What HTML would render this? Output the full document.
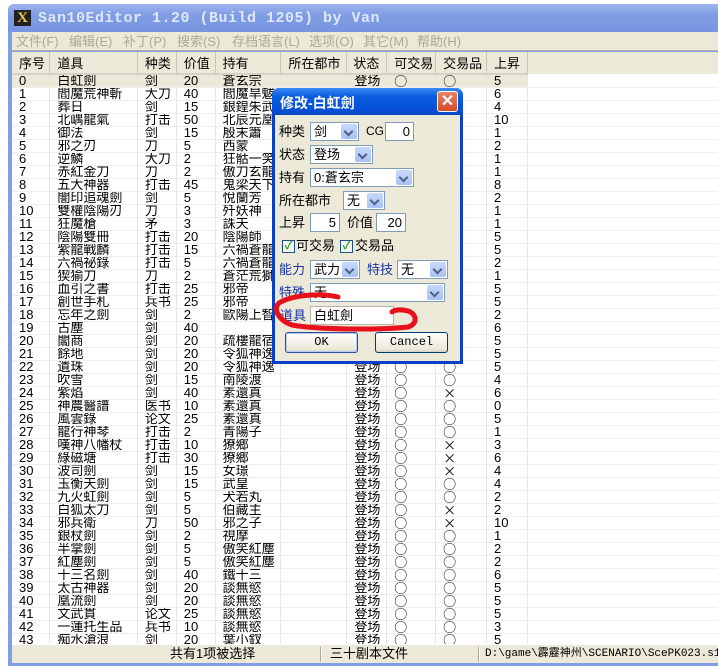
<!DOCTYPE html>
<html><head><meta charset="utf-8">
<style>
*{margin:0;padding:0;box-sizing:border-box}
body{width:718px;height:670px;overflow:hidden;background:#fff;font-family:"Liberation Sans","Noto Sans CJK SC",sans-serif;font-size:12px;position:relative}
.abs{position:absolute}
#win{left:8px;top:4px;width:720px;height:662px;background:#7e9ee6;border-radius:6px 6px 0 0}
#title{left:8px;top:4px;width:720px;height:28px;background:linear-gradient(#9db4ee,#7f9de4 40%,#7896e0);border-radius:6px 6px 0 0}
#title .t{left:30px;top:6px;color:#dfe7fb;font-family:"Liberation Mono",monospace;font-weight:bold;font-size:15px;letter-spacing:0.5px}
#title .ic{left:6px;top:6px;width:17px;height:16px;background:#222;color:#e8c24a;font-family:"Liberation Serif",serif;font-weight:bold;font-size:15px;line-height:16px;text-align:center}
#menu{left:12px;top:32px;width:710px;height:19px;background:#ece9d8;border-bottom:1px solid #b5b2a5;color:#aca899;font-size:13px;line-height:19px}
#menu span{position:absolute;top:0}
#list{left:12px;top:52px;width:710px;height:592px;background:#fff;overflow:hidden}
table{border-collapse:collapse;table-layout:fixed;position:absolute;left:0;top:0}
th{height:22px;background:#ece9d8;font-weight:normal;text-align:left;padding-left:7px;border-right:1px solid #c8c5b8;border-bottom:2px solid #d6d3c6;font-size:13px;white-space:nowrap}
td{height:13px;line-height:12px;padding-left:7px;border-right:1px solid #e6e6e6;border-bottom:1px solid #eeeeee;white-space:nowrap;overflow:hidden;font-size:13px}
td:nth-child(8),td:nth-child(9){font-family:"Noto Sans CJK SC",sans-serif;font-size:13px}
tr.sel td{background:#ece9d8}
#status{left:12px;top:644px;width:710px;height:19px;background:#ece9d8;border-top:1px solid #fff;font-size:13px;line-height:18px;white-space:nowrap}
#status span{position:absolute;top:0}
.sep{position:absolute;top:2px;width:2px;height:15px;border-left:1px solid #aca899;border-right:1px solid #fff}
#dlg{left:272px;top:88px;width:191px;height:276px;background:#0a3fc6;border-radius:7px 7px 0 0}
#dtitle{left:272px;top:88px;width:191px;height:27px;background:linear-gradient(#3d8af7,#0a5ddd 30%,#0550d8 80%,#0a46c0);border-radius:7px 7px 0 0}
#dtitle .t{left:8px;top:5px;color:#fff;font-weight:bold;font-size:14px}
#close{left:165px;top:3px;width:21px;height:21px;background:linear-gradient(#e8846a,#d54a28);border:1px solid #fff;border-radius:3px;color:#fff;text-align:center;font-size:16px;line-height:19px;font-weight:bold}
#dbody{left:275px;top:115px;width:185px;height:246px;background:#ece9d8}
.lbl{position:absolute;font-size:13px;line-height:15px}
.blue{color:#1532a8}
.cb{position:absolute;height:19px;background:#fff;border:1px solid #7f9db9;font-size:13px;line-height:17px;padding-left:3px}
.cb .ar{position:absolute;right:1px;top:1px;width:16px;height:15px;background:linear-gradient(#c7d8fb,#a9c2f4);border-radius:2px}
.cb .ar:after{content:"";position:absolute;left:4px;top:4px;width:5px;height:5px;border-right:2px solid #4d6185;border-bottom:2px solid #4d6185;transform:rotate(45deg)}
.ed{position:absolute;height:19px;background:#fff;border:1px solid #7f9db9;font-size:13px;line-height:17px;text-align:right;padding-right:3px}
.chk{position:absolute;width:13px;height:13px;border:1px solid #1c5180;background:#f4f4f0;color:#21a121;font-size:11px;line-height:11px;text-align:center;font-weight:bold}
.btn{position:absolute;height:21px;border:1px solid #003c74;border-radius:3px;background:linear-gradient(#fff,#ece9d8 85%,#d6d0c5);font-family:"Liberation Mono",monospace;font-size:12px;text-align:center;line-height:19px}
</style></head><body>
<div class="abs" id="win"></div>
<div class="abs" id="title"><div class="abs ic">X</div><div class="abs t">San10Editor 1.20 (Build 1205) by Van</div></div>
<div class="abs" id="menu">
<span style="left:4px">文件(F)</span><span style="left:57px">编辑(E)</span><span style="left:111px">补丁(P)</span><span style="left:165px">搜索(S)</span><span style="left:220px">存档语言(L)</span><span style="left:297px">选项(O)</span><span style="left:351px">其它(M)</span><span style="left:405px">帮助(H)</span>
</div>
<div class="abs" id="list">
<table>
<colgroup><col style="width:38px"><col style="width:88px"><col style="width:39px"><col style="width:39px"><col style="width:66px"><col style="width:59px"><col style="width:40px"><col style="width:49px"><col style="width:51px"><col style="width:41px"><col style="width:200px"></colgroup>
<tr><th>序号</th><th>道具</th><th>种类</th><th>价值</th><th>持有</th><th style="text-align:right;padding-right:6px">所在都市</th><th style="padding-left:6px">状态</th><th>可交易</th><th>交易品</th><th>上昇</th><th style="border:none;background:#ece9d8"></th></tr>
<tr class="sel"><td>0</td><td>白虹劍</td><td>剑</td><td>20</td><td>蒼玄宗</td><td></td><td>登场</td><td>○</td><td>○</td><td>5</td><td style="background:#fff"></td></tr>
<tr><td>1</td><td>閻魔荒神斬</td><td>大刀</td><td>40</td><td>閻魔旱魃</td><td></td><td>登场</td><td>○</td><td>○</td><td>6</td><td></td></tr>
<tr><td>2</td><td>葬日</td><td>剑</td><td>15</td><td>銀鍠朱武</td><td></td><td>登场</td><td>○</td><td>○</td><td>4</td><td></td></tr>
<tr><td>3</td><td>北嵎龍氣</td><td>打击</td><td>50</td><td>北辰元凰</td><td></td><td>登场</td><td>○</td><td>○</td><td>10</td><td></td></tr>
<tr><td>4</td><td>御法</td><td>剑</td><td>15</td><td>殷末簫</td><td></td><td>登场</td><td>○</td><td>○</td><td>1</td><td></td></tr>
<tr><td>5</td><td>邪之刃</td><td>刀</td><td>5</td><td>西蒙</td><td></td><td>登场</td><td>○</td><td>○</td><td>2</td><td></td></tr>
<tr><td>6</td><td>逆鱗</td><td>大刀</td><td>2</td><td>狂骷一笑</td><td></td><td>登场</td><td>○</td><td>○</td><td>1</td><td></td></tr>
<tr><td>7</td><td>赤紅金刀</td><td>刀</td><td>2</td><td>傲刀玄龍</td><td></td><td>登场</td><td>○</td><td>○</td><td>1</td><td></td></tr>
<tr><td>8</td><td>五大神器</td><td>打击</td><td>45</td><td>鬼梁天下</td><td></td><td>登场</td><td>○</td><td>○</td><td>8</td><td></td></tr>
<tr><td>9</td><td>闇印追魂劍</td><td>剑</td><td>5</td><td>悅蘭芳</td><td></td><td>登场</td><td>○</td><td>○</td><td>2</td><td></td></tr>
<tr><td>10</td><td>雙權陰陽刃</td><td>刀</td><td>3</td><td>歼妖神</td><td></td><td>登场</td><td>○</td><td>○</td><td>1</td><td></td></tr>
<tr><td>11</td><td>狂魔槍</td><td>矛</td><td>3</td><td>誅天</td><td></td><td>登场</td><td>○</td><td>○</td><td>1</td><td></td></tr>
<tr><td>12</td><td>陰陽雙冊</td><td>打击</td><td>20</td><td>陰陽師</td><td></td><td>登场</td><td>○</td><td>○</td><td>5</td><td></td></tr>
<tr><td>13</td><td>紫龍戰麟</td><td>打击</td><td>15</td><td>六禍蒼龍</td><td></td><td>登场</td><td>○</td><td>○</td><td>5</td><td></td></tr>
<tr><td>14</td><td>六禍祕錄</td><td>打击</td><td>5</td><td>六禍蒼龍</td><td></td><td>登场</td><td>○</td><td>○</td><td>2</td><td></td></tr>
<tr><td>15</td><td>猰㺄刀</td><td>刀</td><td>2</td><td>蒼茫荒獅</td><td></td><td>登场</td><td>○</td><td>○</td><td>1</td><td></td></tr>
<tr><td>16</td><td>血引之書</td><td>打击</td><td>25</td><td>邪帝</td><td></td><td>登场</td><td>○</td><td>○</td><td>5</td><td></td></tr>
<tr><td>17</td><td>創世手札</td><td>兵书</td><td>25</td><td>邪帝</td><td></td><td>登场</td><td>○</td><td>○</td><td>5</td><td></td></tr>
<tr><td>18</td><td>忘年之劍</td><td>剑</td><td>2</td><td>歐陽上智</td><td></td><td>登场</td><td>○</td><td>○</td><td>2</td><td></td></tr>
<tr><td>19</td><td>古塵</td><td>剑</td><td>40</td><td></td><td></td><td>登场</td><td>○</td><td>○</td><td>6</td><td></td></tr>
<tr><td>20</td><td>闟商</td><td>剑</td><td>20</td><td>疏樓龍宿</td><td></td><td>登场</td><td>○</td><td>○</td><td>5</td><td></td></tr>
<tr><td>21</td><td>餘地</td><td>剑</td><td>20</td><td>令狐神逸</td><td></td><td>登场</td><td>○</td><td>○</td><td>5</td><td></td></tr>
<tr><td>22</td><td>遺珠</td><td>剑</td><td>20</td><td>令狐神逸</td><td></td><td>登场</td><td>○</td><td>○</td><td>5</td><td></td></tr>
<tr><td>23</td><td>吹雪</td><td>剑</td><td>15</td><td>南陵渡</td><td></td><td>登场</td><td>○</td><td>○</td><td>4</td><td></td></tr>
<tr><td>24</td><td>紫焰</td><td>剑</td><td>40</td><td>素還真</td><td></td><td>登场</td><td>○</td><td>×</td><td>6</td><td></td></tr>
<tr><td>25</td><td>神農醫譜</td><td>医书</td><td>10</td><td>素還真</td><td></td><td>登场</td><td>○</td><td>○</td><td>0</td><td></td></tr>
<tr><td>26</td><td>風雲錄</td><td>论文</td><td>25</td><td>素還真</td><td></td><td>登场</td><td>○</td><td>○</td><td>5</td><td></td></tr>
<tr><td>27</td><td>龍行神琴</td><td>打击</td><td>2</td><td>青陽子</td><td></td><td>登场</td><td>○</td><td>○</td><td>1</td><td></td></tr>
<tr><td>28</td><td>嘆神八幡杖</td><td>打击</td><td>10</td><td>獠鄉</td><td></td><td>登场</td><td>○</td><td>×</td><td>3</td><td></td></tr>
<tr><td>29</td><td>綠磁塘</td><td>打击</td><td>30</td><td>獠鄉</td><td></td><td>登场</td><td>○</td><td>×</td><td>6</td><td></td></tr>
<tr><td>30</td><td>波司劍</td><td>剑</td><td>15</td><td>女璟</td><td></td><td>登场</td><td>○</td><td>×</td><td>4</td><td></td></tr>
<tr><td>31</td><td>玉衡天劍</td><td>剑</td><td>15</td><td>武皇</td><td></td><td>登场</td><td>○</td><td>○</td><td>4</td><td></td></tr>
<tr><td>32</td><td>九火虹劍</td><td>剑</td><td>5</td><td>犬若丸</td><td></td><td>登场</td><td>○</td><td>○</td><td>2</td><td></td></tr>
<tr><td>33</td><td>白狐太刀</td><td>剑</td><td>5</td><td>伯藏主</td><td></td><td>登场</td><td>○</td><td>×</td><td>2</td><td></td></tr>
<tr><td>34</td><td>邪兵衛</td><td>刀</td><td>50</td><td>邪之子</td><td></td><td>登场</td><td>○</td><td>×</td><td>10</td><td></td></tr>
<tr><td>35</td><td>銀杖劍</td><td>剑</td><td>2</td><td>視摩</td><td></td><td>登场</td><td>○</td><td>○</td><td>1</td><td></td></tr>
<tr><td>36</td><td>半掌劍</td><td>剑</td><td>5</td><td>傲笑紅塵</td><td></td><td>登场</td><td>○</td><td>○</td><td>2</td><td></td></tr>
<tr><td>37</td><td>紅塵劍</td><td>剑</td><td>5</td><td>傲笑紅塵</td><td></td><td>登场</td><td>○</td><td>○</td><td>2</td><td></td></tr>
<tr><td>38</td><td>十三名劍</td><td>剑</td><td>40</td><td>鐵十三</td><td></td><td>登场</td><td>○</td><td>○</td><td>6</td><td></td></tr>
<tr><td>39</td><td>太古神器</td><td>剑</td><td>20</td><td>談無慾</td><td></td><td>登场</td><td>○</td><td>○</td><td>5</td><td></td></tr>
<tr><td>40</td><td>凰流劍</td><td>剑</td><td>20</td><td>談無慾</td><td></td><td>登场</td><td>○</td><td>○</td><td>5</td><td></td></tr>
<tr><td>41</td><td>文武貫</td><td>论文</td><td>25</td><td>談無慾</td><td></td><td>登场</td><td>○</td><td>○</td><td>5</td><td></td></tr>
<tr><td>42</td><td>一蓮托生品</td><td>兵书</td><td>10</td><td>談無慾</td><td></td><td>登场</td><td>○</td><td>○</td><td>3</td><td></td></tr>
<tr><td>43</td><td>痴水滄浪</td><td>剑</td><td>20</td><td>葉小釵</td><td></td><td>登场</td><td>○</td><td>○</td><td>5</td><td></td></tr>
</table>
</div>
<div class="abs" id="status">
<span style="left:158px">共有1项被选择</span><div class="sep" style="left:308px"></div>
<span style="left:318px">三十剧本文件</span><div class="sep" style="left:466px"></div>
<span style="left:473px;font-family:'Liberation Mono','Noto Sans CJK SC',monospace;font-size:11px;white-space:nowrap">D:\game\霹靂神州\SCENARIO\ScePK023.s10</span>
</div>
<div class="abs" style="left:8px;top:663px;width:720px;height:3px;background:#7e9ee6"></div>

<div class="abs" id="dlg"></div>
<div class="abs" id="dtitle"><div class="abs t">修改-白虹劍</div><div class="abs" id="close">✕</div></div>
<div class="abs" id="dbody"></div>
<div class="lbl" style="left:279px;top:124px">种类</div>
<div class="cb" style="left:310px;top:122px;width:49px">剑<div class="ar"></div></div>
<div class="lbl" style="left:366px;top:124px;font-size:12px">CG</div>
<div class="ed" style="left:385px;top:122px;width:29px">0</div>
<div class="lbl" style="left:279px;top:147px">状态</div>
<div class="cb" style="left:310px;top:145px;width:63px">登场<div class="ar"></div></div>
<div class="lbl" style="left:279px;top:170px">持有</div>
<div class="cb" style="left:310px;top:168px;width:104px">0:蒼玄宗<div class="ar"></div></div>
<div class="lbl" style="left:279px;top:193px">所在都市</div>
<div class="cb" style="left:343px;top:191px;width:42px">无<div class="ar"></div></div>
<div class="lbl" style="left:279px;top:215px">上昇</div>
<div class="ed" style="left:310px;top:213px;width:30px">5</div>
<div class="lbl" style="left:347px;top:215px">价值</div>
<div class="ed" style="left:376px;top:213px;width:30px">20</div>
<div class="chk" style="left:282px;top:240px">✓</div><div class="lbl" style="left:296px;top:238px">可交易</div>
<div class="chk" style="left:340px;top:240px">✓</div><div class="lbl" style="left:355px;top:238px">交易品</div>
<div class="lbl blue" style="left:279px;top:262px">能力</div>
<div class="cb" style="left:310px;top:260px;width:50px">武力<div class="ar"></div></div>
<div class="lbl blue" style="left:367px;top:262px">特技</div>
<div class="cb" style="left:397px;top:260px;width:51px">无<div class="ar"></div></div>
<div class="lbl blue" style="left:279px;top:285px">特殊</div>
<div class="cb" style="left:310px;top:283px;width:135px">无<div class="ar"></div></div>
<div class="lbl blue" style="left:280px;top:308px">道具</div>
<div class="abs" style="left:310px;top:306px;width:84px;height:19px;background:#fff;border:1px solid #b9b6a8;font-size:13px;line-height:17px;padding-left:3px">白虹劍</div>
<div class="btn" style="left:285px;top:332px;width:73px;border-color:#2a4ea0;box-shadow:inset 0 0 0 1px #b8c8f0">OK</div>
<div class="btn" style="left:375px;top:332px;width:73px">Cancel</div>
<svg class="abs" style="left:0;top:0" width="718" height="670"><path d="M338 297 C318 292 290 296 279 303 C273 309 278 320 292 325 C320 330 380 330 408 327 C418 324 417 314 408 311 C400 309 394 310 392 312" fill="none" stroke="#e8101a" stroke-width="5" stroke-linecap="round"/></svg>
</body></html>
